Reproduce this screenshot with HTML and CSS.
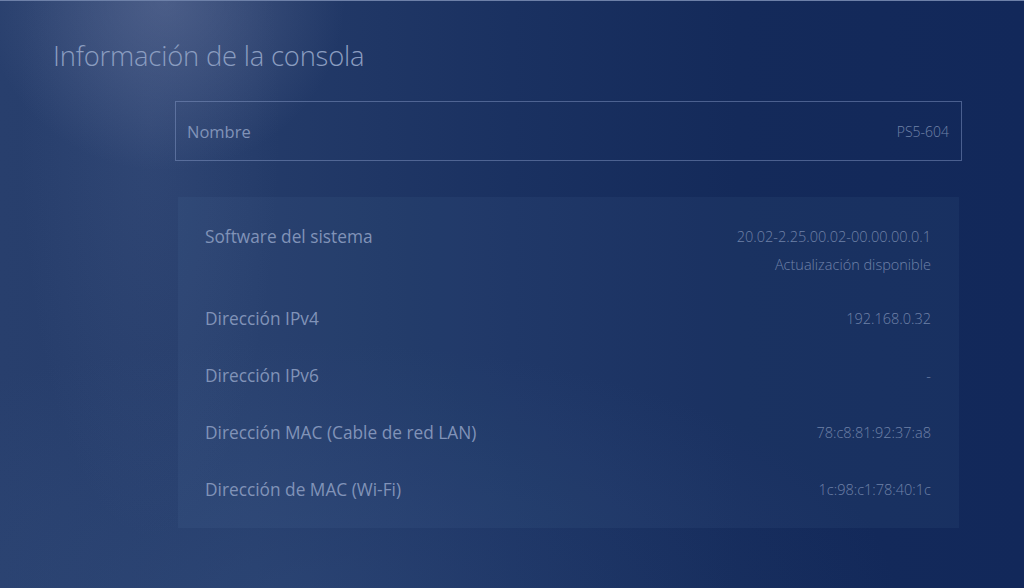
FILE: index.html
```html
<!DOCTYPE html>
<html lang="es">
<head>
<meta charset="utf-8">
<title>Información de la consola</title>
<link rel="stylesheet" href="styles.css">
</head>
<body>
<div class="screen">
  <h1 class="title">Información de la consola</h1>
  <div class="content">
    <div class="name-box">
      <span class="name-label">Nombre</span>
      <span class="name-value">PS5-604</span>
    </div>
    <div class="info-panel">
      <div class="row row-software">
        <span class="label">Software del sistema</span>
        <div class="values">
          <span class="value">20.02-2.25.00.02-00.00.00.0.1</span>
          <span class="value sub">Actualización disponible</span>
        </div>
      </div>
      <div class="row">
        <span class="label">Dirección IPv4</span>
        <span class="value">192.168.0.32</span>
      </div>
      <div class="row">
        <span class="label">Dirección IPv6</span>
        <span class="value">-</span>
      </div>
      <div class="row">
        <span class="label">Dirección MAC (Cable de red LAN)</span>
        <span class="value">78:c8:81:92:37:a8</span>
      </div>
      <div class="row">
        <span class="label">Dirección de MAC (Wi-Fi)</span>
        <span class="value">1c:98:c1:78:40:1c</span>
      </div>
    </div>
  </div>
</div>
</body>
</html>
```

FILE: styles.css
```css
html, body {
  margin: 0;
  padding: 0;
}

body {
  width: 1024px;
  height: 588px;
  overflow: hidden;
  font-family: "Open Sans", "Noto Sans", "DejaVu Sans", sans-serif;
}

.screen {
  box-sizing: border-box;
  width: 1024px;
  height: 588px;
  border-top: 1px solid #6d80a8;
  padding-top: 39px;
  background:
    radial-gradient(ellipse 180px 170px at 165px 0px, rgba(120, 132, 170, 0.4), rgba(120, 132, 170, 0) 100%),
    radial-gradient(ellipse 130px 420px at 150px 120px, rgba(100, 120, 165, 0.16), rgba(100, 120, 165, 0) 100%),
    radial-gradient(ellipse 600px 260px at 300px 600px, rgba(60, 90, 140, 0.3), rgba(60, 90, 140, 0) 100%),
    linear-gradient(to right, #283f6d 0%, #243b69 25%, #1a3161 50%, #142a5a 72%, #12285a 100%);
}

.title {
  margin: 0 0 0 53px;
  font-weight: 300;
  font-size: 27.4px;
  line-height: 31px;
  color: #8b9dc0;
  letter-spacing: -0.2px;
}

.content {
  margin: 30px 0 0 175px;
  width: 787px;
}

.name-box {
  box-sizing: border-box;
  height: 60px;
  border: 1px solid rgba(130, 150, 195, 0.5);
  display: flex;
  align-items: center;
  justify-content: space-between;
  padding: 0 12px 0 11px;
}

.name-label {
  font-size: 16.5px;
  font-weight: 400;
  color: #8193b8;
}

.name-value {
  font-size: 14px;
  font-weight: 300;
  color: #7082a8;
}

.info-panel {
  margin: 36px 3px 0 3px;
  padding: 28px 28px 26px 27px;
  background: rgba(120, 150, 205, 0.07);
  display: flex;
  flex-direction: column;
  gap: 33px;
}

.row {
  display: flex;
  justify-content: space-between;
  align-items: flex-start;
}

.label {
  font-size: 17.3px;
  line-height: 24px;
  font-weight: 400;
  color: #8193b8;
}

.values {
  display: flex;
  flex-direction: column;
  align-items: flex-end;
}

.value {
  font-size: 14.5px;
  line-height: 24px;
  font-weight: 300;
  color: #6f81a8;
}

.value.sub {
  line-height: 18px;
  margin-top: 7px;
}
```
